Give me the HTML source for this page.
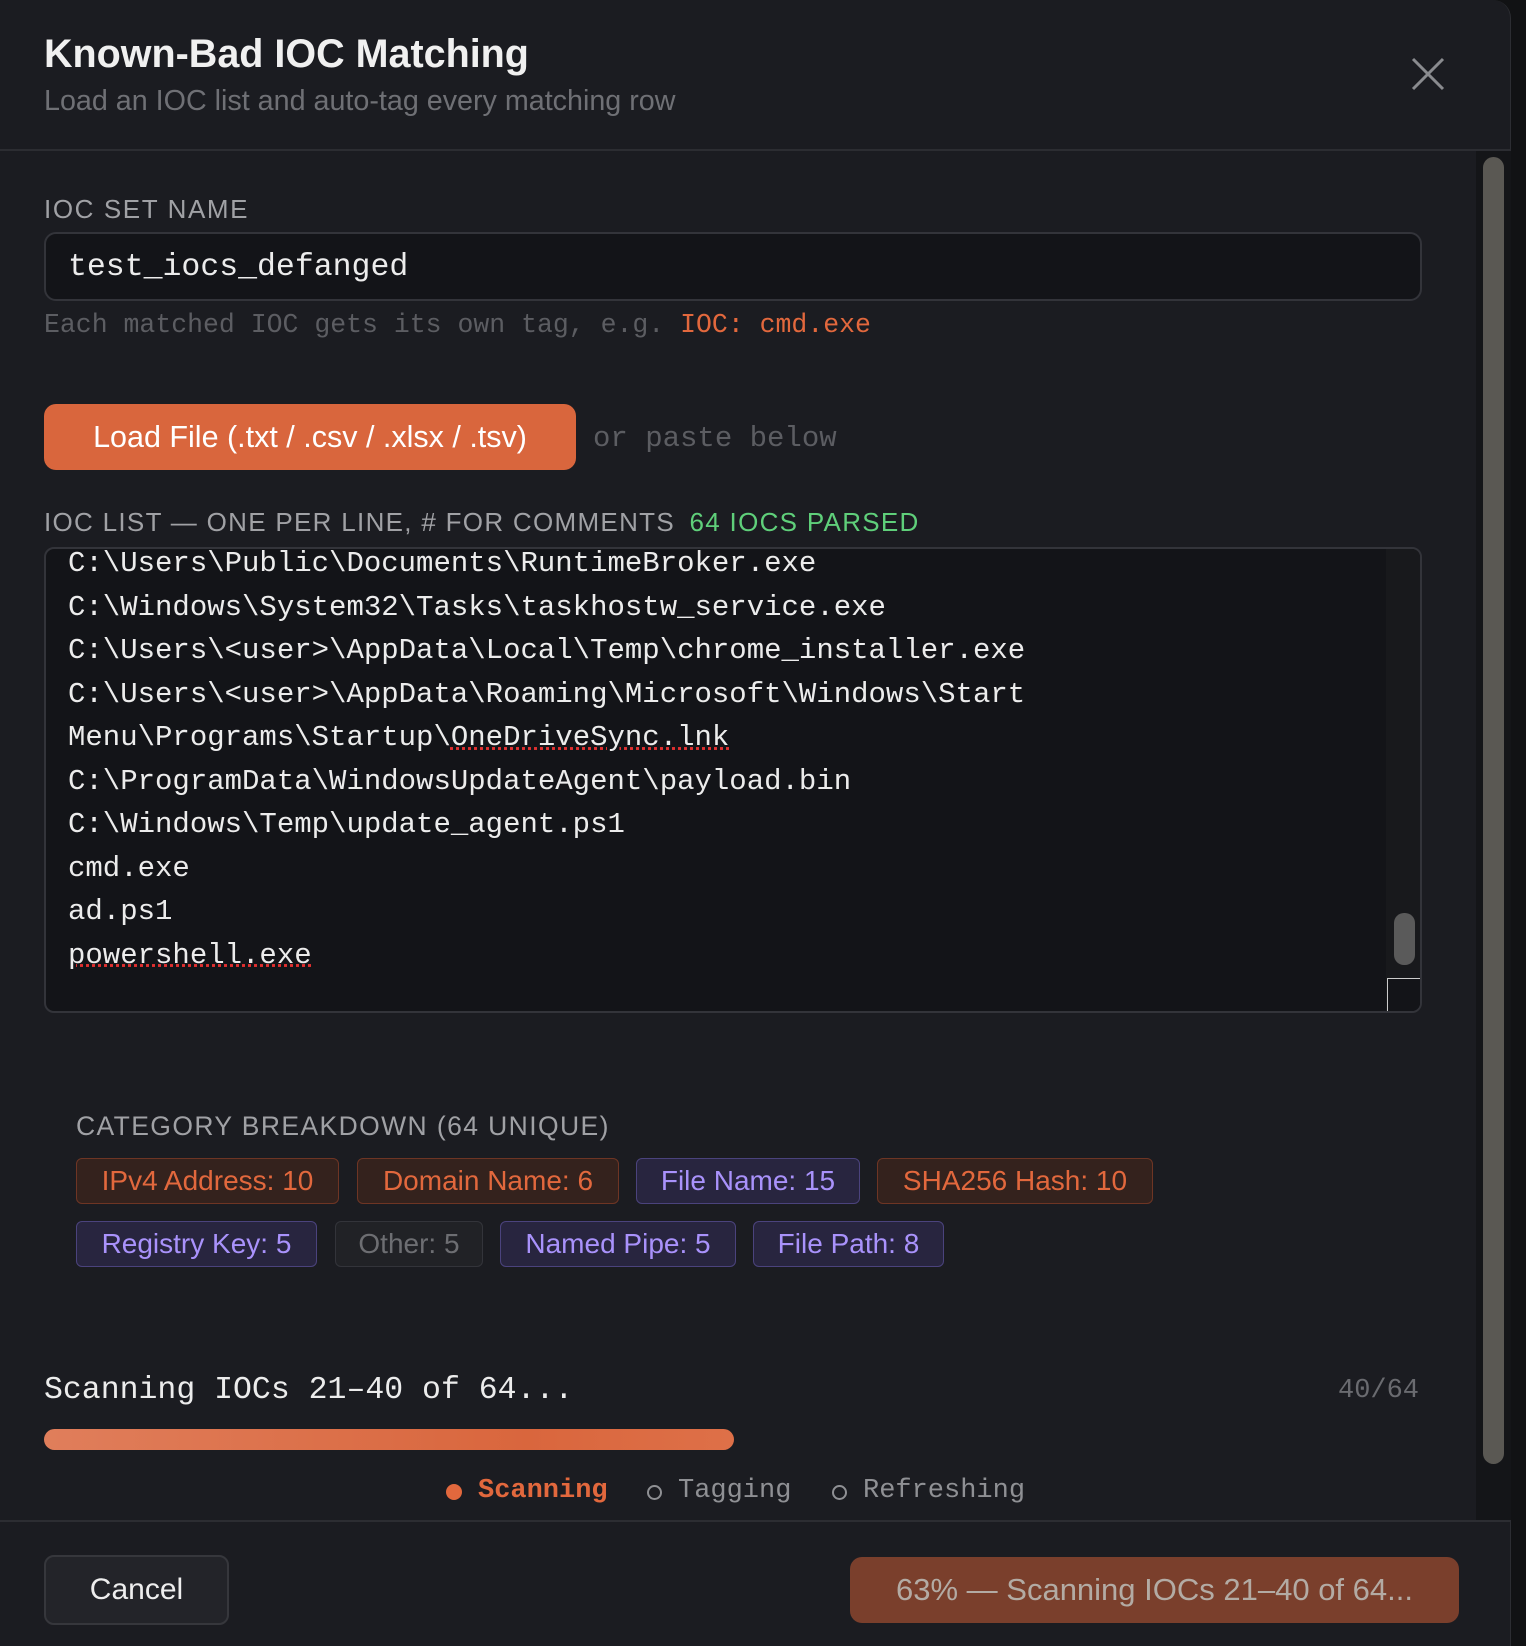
<!DOCTYPE html>
<html><head><meta charset="utf-8"><style>
*{box-sizing:border-box;margin:0;padding:0}
body{width:1526px;height:1646px;background:#111214;font-family:"Liberation Sans",sans-serif;position:relative;overflow:hidden}
.modal{position:absolute;left:0;top:0;width:1511px;height:1646px;background:#1b1c21;border-top-right-radius:18px;border-right:1px solid #2c2d32}
.abs{position:absolute;white-space:nowrap}
.mono{font-family:"Liberation Mono",monospace}
.chip{position:absolute;height:46px;border-radius:6px;font-size:28px;line-height:44px;text-align:center;border:1.5px solid}
.o{background:#34221d;border-color:#6e3524;color:#e2683d}
.p{background:#28253f;border-color:#4b437d;color:#a992fb}
.g{background:#212226;border-color:#33343a;color:#6d6e72}
</style></head><body>
<div class="modal">
 <div class="abs" style="left:44px;top:32px;font-size:39.5px;font-weight:bold;color:#f0f0f0">Known-Bad IOC Matching</div>
 <div class="abs" style="left:44px;top:85px;font-size:28.7px;color:#6f7075">Load an IOC list and auto-tag every matching row</div>
 <svg class="abs" style="left:1411px;top:57px" width="34" height="34" viewBox="0 0 34 34"><path d="M2 2L32 32M32 2L2 32" stroke="#8a8b8f" stroke-width="3"/></svg>
 <div class="abs" style="left:0;top:149px;width:1511px;height:2px;background:#2c2d32"></div>
 <div class="abs" style="left:1476px;top:151px;width:35px;height:1370px;background:#141518"></div>
 <div class="abs" style="left:1483px;top:157px;width:21px;height:1307px;background:#5a5853;border-radius:11px"></div>

 <div class="abs" style="left:44px;top:194px;font-size:26px;color:#a0a1a5;letter-spacing:1.6px">IOC SET NAME</div>
 <div class="abs" style="left:44px;top:232px;width:1378px;height:69px;background:#131418;border:2px solid #33343a;border-radius:12px"></div>
 <div class="abs mono" style="left:68px;top:250px;font-size:31.5px;color:#ececec">test_iocs_defanged</div>
 <div class="abs mono" style="left:44px;top:310px;font-size:26.5px;color:#5c5d62">Each matched IOC gets its own tag, e.g. <span style="color:#e2683d">IOC: cmd.exe</span></div>

 <div class="abs" style="left:44px;top:404px;width:532px;height:66px;background:#d9663d;border-radius:12px;color:#fff;font-size:30.5px;line-height:66px;text-align:center">Load File (.txt / .csv / .xlsx / .tsv)</div>
 <div class="abs mono" style="left:593px;top:422px;font-size:29px;color:#5c5d62">or paste below</div>

 <div class="abs" style="left:44px;top:507px;font-size:26px;color:#a0a1a5;letter-spacing:1.3px">IOC LIST — ONE PER LINE, # FOR COMMENTS <span style="color:#5fcf7a;margin-left:6px">64 IOCS PARSED</span></div>
 <div class="abs" style="left:44px;top:547px;width:1378px;height:466px;background:#131418;border:2px solid #33343a;border-radius:10px;overflow:hidden">
  <div class="abs mono" style="left:22px;top:-7px;font-size:29px;line-height:43.5px;color:#ececec;white-space:pre">C:\Users\Public\Documents\RuntimeBroker.exe
C:\Windows\System32\Tasks\taskhostw_service.exe
C:\Users\&lt;user&gt;\AppData\Local\Temp\chrome_installer.exe
C:\Users\&lt;user&gt;\AppData\Roaming\Microsoft\Windows\Start
Menu\Programs\Startup\<span style="text-decoration:underline dotted #e03030">OneDriveSync.lnk</span>
C:\ProgramData\WindowsUpdateAgent\payload.bin
C:\Windows\Temp\update_agent.ps1
cmd.exe
ad.ps1
<span style="text-decoration:underline dotted #e03030">powershell.exe</span></div>
  <div class="abs" style="left:1340px;top:0;width:36px;height:466px;background:#18191c"></div>
  <div class="abs" style="left:1348px;top:364px;width:21px;height:52px;background:#5a5a5a;border-radius:10px"></div>
  <div class="abs" style="left:1341px;top:429px;width:36px;height:36px;border:1.5px solid #ccc;background:#131418"></div>
 </div>

 <div class="abs" style="left:76px;top:1111px;font-size:26.5px;color:#a0a1a5;letter-spacing:1.4px">CATEGORY BREAKDOWN (64 UNIQUE)</div>
 <div class="chip o" style="left:76px;top:1158px;width:263px">IPv4 Address: 10</div>
 <div class="chip o" style="left:357px;top:1158px;width:262px">Domain Name: 6</div>
 <div class="chip p" style="left:636px;top:1158px;width:224px">File Name: 15</div>
 <div class="chip o" style="left:877px;top:1158px;width:276px">SHA256 Hash: 10</div>
 <div class="chip p" style="left:76px;top:1221px;width:241px">Registry Key: 5</div>
 <div class="chip g" style="left:335px;top:1221px;width:148px">Other: 5</div>
 <div class="chip p" style="left:500px;top:1221px;width:236px">Named Pipe: 5</div>
 <div class="chip p" style="left:753px;top:1221px;width:191px">File Path: 8</div>

 <div class="abs mono" style="left:44px;top:1373px;font-size:31.5px;color:#ececec">Scanning IOCs 21–40 of 64...</div>
 <div class="abs mono" style="left:1338px;top:1376px;font-size:27px;color:#6a6b70">40/64</div>
 <div class="abs" style="left:44px;top:1429px;width:690px;height:21px;border-radius:11px;background:linear-gradient(90deg,#e07e5b,#d9663d 70%,#de7048)"></div>
 <div class="abs" style="left:446px;top:1484px;width:16px;height:16px;border-radius:50%;background:#e2683d"></div>
 <div class="abs mono" style="left:478px;top:1476px;font-size:27px;color:#e2683d;font-weight:bold">Scanning</div>
 <div class="abs" style="left:647px;top:1485px;width:15px;height:15px;border-radius:50%;border:2px solid #8f9094"></div>
 <div class="abs mono" style="left:678px;top:1476px;font-size:27px;color:#8f9094">Tagging</div>
 <div class="abs" style="left:832px;top:1485px;width:15px;height:15px;border-radius:50%;border:2px solid #8f9094"></div>
 <div class="abs mono" style="left:863px;top:1476px;font-size:27px;color:#8f9094">Refreshing</div>

 <div class="abs" style="left:0;top:1520px;width:1511px;height:2px;background:#2c2d32"></div>
 <div class="abs" style="left:44px;top:1555px;width:185px;height:70px;background:#232429;border:2px solid #36373c;border-radius:10px;color:#eee;font-size:30px;line-height:66px;text-align:center">Cancel</div>
 <div class="abs" style="left:850px;top:1557px;width:609px;height:66px;background:#7a3f2c;border-radius:12px;color:#b3aba4;font-size:31px;line-height:66px;text-align:center">63% — Scanning IOCs 21–40 of 64...</div>
</div>
</body></html>
